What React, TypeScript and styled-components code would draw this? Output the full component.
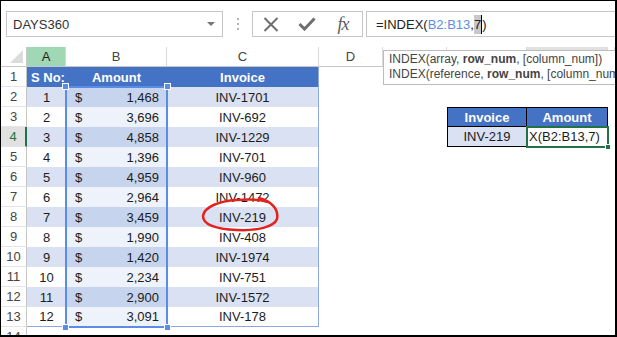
import React from 'react';
import styled, { createGlobalStyle, css } from 'styled-components';

const GlobalStyle = createGlobalStyle`
  html, body {
    margin: 0;
    padding: 0;
    background: #fff;
  }
  body {
    font-family: 'Liberation Sans', Arial, sans-serif;
  }
  * {
    box-sizing: border-box;
  }
`;

// row header, A..H
const COLUMNS = '26px 39px 101px 152px 64px 64px 80px 81px 1fr';

const TABLE_BLUE = '#4472c4';
const BAND = '#d9e1f2';
const EDGE = '#8ea9db';
const RANGE = '#5b8de6';
const EXCEL_GREEN = '#217346';

const Frame = styled.div`
  width: 617px;
  height: 337px;
  border: 1px solid #000;
  border-right-width: 2px;
  border-bottom-width: 2px;
  overflow: hidden;
  background: #fff;
  display: flex;
  flex-direction: column;
`;

const Toolbar = styled.div`
  height: 46px;
  flex: none;
  display: flex;
  align-items: flex-start;
  padding: 10px 0 0 5px;
`;

const NameBox = styled.div`
  width: 217px;
  height: 26px;
  border: 1px solid #c6c6c6;
  display: flex;
  align-items: center;
  justify-content: space-between;
  padding: 0 7px 0 6px;
  font-size: 13px;
  color: #333;
`;

const DropArrow = styled.span`
  width: 0;
  height: 0;
  border-left: 4px solid transparent;
  border-right: 4px solid transparent;
  border-top: 4px solid #777;
`;

const Grip = styled.div`
  width: 29px;
  height: 26px;
  display: flex;
  flex-direction: column;
  align-items: center;
  justify-content: center;
  gap: 3px;
`;

const GripDot = styled.span`
  width: 2px;
  height: 2px;
  background: #b3b3b3;
`;

const ButtonBox = styled.div`
  width: 111px;
  height: 26px;
  border: 1px solid #c6c6c6;
  display: grid;
  grid-template-columns: repeat(3, 36px);
  align-items: center;
  justify-items: center;
`;

const FxLabel = styled.span`
  font-family: 'Liberation Serif', 'Times New Roman', serif;
  font-style: italic;
  font-size: 18px;
  color: #5c5c5c;
  letter-spacing: -1px;
  line-height: 1;
`;

const FormulaInput = styled.div`
  flex: 1;
  margin-left: 3px;
  height: 26px;
  border: 1px solid #c6c6c6;
  border-right: none;
  display: flex;
  align-items: center;
  padding-left: 9px;
  font-size: 13px;
  color: #222;
  white-space: nowrap;
`;

const RefText = styled.span`
  color: ${RANGE};
`;

const Caret = styled.span`
  background: #c8c8c8;
  border-right: 1px solid #000;
  padding: 2px 0;
`;

const Sheet = styled.div`
  position: relative;
`;

const CellGrid = styled.div`
  display: grid;
  grid-template-columns: ${COLUMNS};
  grid-auto-rows: 20px;
  font-size: 13px;
`;

const OverlayGrid = styled(CellGrid)`
  position: absolute;
  inset: 0;
  pointer-events: none;
`;

const Corner = styled.div`
  border-right: 1px solid #c6c6c6;
  border-bottom: 1px solid #c6c6c6;
  display: flex;
  align-items: flex-end;
  justify-content: flex-end;
  padding: 0 3px 3px 0;
`;

const CornerMark = styled.span`
  width: 0;
  height: 0;
  border-left: 13px solid transparent;
  border-bottom: 13px solid #dcdcdc;
`;

const ColHead = styled.div<{ $state?: 'green' | 'gray' }>`
  display: flex;
  align-items: center;
  justify-content: center;
  border-right: 1px solid #dadada;
  border-bottom: 1px solid #c6c6c6;
  background: ${(p) => (p.$state === 'green' ? '#a0d7b4' : p.$state === 'gray' ? '#e1e1e1' : '#fff')};
  color: ${(p) => (p.$state === 'green' ? '#1e1e1e' : '#444')};
`;

const RowHead = styled.div<{ $active?: boolean }>`
  display: flex;
  align-items: center;
  justify-content: center;
  border-bottom: 1px solid #e4e4e4;
  border-right: ${(p) => (p.$active ? `2px solid ${EXCEL_GREEN}` : '1px solid #c6c6c6')};
  background: ${(p) => (p.$active ? '#e1e1e1' : '#fff')};
  color: ${(p) => (p.$active ? EXCEL_GREEN : '#444')};
`;

type Tone = 'head' | 'band' | 'plain' | 'bandRange' | 'plainRange' | 'empty';

const toneBg: Record<Tone, string> = {
  head: TABLE_BLUE,
  band: BAND,
  plain: '#fff',
  bandRange: '#c7d4ee',
  plainRange: '#edf2fb',
  empty: '#fff',
};

const Cell = styled.div<{
  $tone: Tone;
  $align?: 'left' | 'center' | 'split';
  $edge?: boolean;
  $last?: boolean;
}>`
  display: flex;
  align-items: center;
  white-space: nowrap;
  overflow: hidden;
  background: ${(p) => toneBg[p.$tone]};
  color: ${(p) => (p.$tone === 'head' ? '#fff' : '#1c1c1c')};
  font-weight: ${(p) => (p.$tone === 'head' ? 700 : 400)};
  justify-content: ${(p) =>
    p.$align === 'left' ? 'flex-start' : p.$align === 'split' ? 'space-between' : 'center'};
  padding: ${(p) => (p.$align === 'left' ? '0 0 0 4px' : p.$align === 'split' ? '0 8px 0 9px' : '0')};
  ${(p) =>
    p.$edge &&
    css`
      border-right: 1px solid ${EDGE};
    `}
  ${(p) =>
    p.$last &&
    css`
      border-bottom: 1px solid ${EDGE};
    `}
`;

const LookupCell = styled.div<{ $head?: boolean; $first?: boolean; $top?: boolean; $left?: boolean }>`
  display: flex;
  align-items: center;
  justify-content: ${(p) => (p.$left ? 'flex-start' : 'center')};
  padding-left: ${(p) => (p.$left ? '2px' : '0')};
  white-space: nowrap;
  overflow: hidden;
  background: ${(p) => (p.$head ? TABLE_BLUE : p.$first ? BAND : '#fff')};
  color: ${(p) => (p.$head ? '#fff' : '#1c1c1c')};
  font-weight: ${(p) => (p.$head ? 700 : 400)};
  border-right: 1px solid #000;
  border-bottom: 1px solid #000;
  border-left: ${(p) => (p.$first ? '1px solid #000' : 'none')};
  border-top: ${(p) => (p.$top ? '1px solid #000' : 'none')};
`;

const RangeBox = styled.div`
  grid-row: 3 / 15;
  grid-column: 3 / 4;
  margin: -1px;
  border: 2px solid ${RANGE};
  position: relative;
`;

const Handle = styled.span<{ $v: 'top' | 'bottom'; $h: 'left' | 'right' }>`
  position: absolute;
  width: 7px;
  height: 7px;
  background: ${RANGE};
  border: 1px solid #fff;
  ${(p) => (p.$v === 'top' ? 'top: -5px;' : 'bottom: -5px;')}
  ${(p) => (p.$h === 'left' ? 'left: -5px;' : 'right: -5px;')}
`;

const ActiveBox = styled.div`
  grid-row: 5 / 6;
  grid-column: 8 / 9;
  margin: -1px;
  border: 2px solid ${EXCEL_GREEN};
  position: relative;
`;

const FillHandle = styled.span`
  position: absolute;
  right: -4px;
  bottom: -4px;
  width: 6px;
  height: 6px;
  background: ${EXCEL_GREEN};
  border: 1px solid #fff;
`;

const Circled = styled.div`
  grid-row: 8 / 11;
  grid-column: 4 / 5;
  svg {
    overflow: visible;
    display: block;
  }
`;

const Tooltip = styled.div`
  position: absolute;
  top: 3px;
  left: 382px;
  width: 260px;
  background: #fff;
  border: 1px solid #bcbcbc;
  padding: 1px 4px 2px 5px;
  font-size: 12px;
  line-height: 15px;
  color: #444;
  white-space: nowrap;
`;

const data: [number, string, string][] = [
  [1, '1,468', 'INV-1701'],
  [2, '3,696', 'INV-692'],
  [3, '4,858', 'INV-1229'],
  [4, '1,396', 'INV-701'],
  [5, '4,959', 'INV-960'],
  [6, '2,964', 'INV-1472'],
  [7, '3,459', 'INV-219'],
  [8, '1,990', 'INV-408'],
  [9, '1,420', 'INV-1974'],
  [10, '2,234', 'INV-751'],
  [11, '2,900', 'INV-1572'],
  [12, '3,091', 'INV-178'],
];

// E..H headers sit under the function tooltip, so only their boxes show
const headers = [
  { key: 'A', label: 'A', state: 'green' as const },
  { key: 'B', label: 'B' },
  { key: 'C', label: 'C' },
  { key: 'D', label: 'D' },
  { key: 'E', label: '' },
  { key: 'F', label: '' },
  { key: 'G', label: '', state: 'gray' as const },
  { key: 'H', label: '' },
];

const CancelIcon = () => (
  <svg width="16" height="15" viewBox="0 0 16 15">
    <path d="M1.5 1 L14.5 14 M14.5 1 L1.5 14" stroke="#6e6e6e" strokeWidth="2" fill="none" />
  </svg>
);

const EnterIcon = () => (
  <svg width="18" height="14" viewBox="0 0 18 14">
    <path d="M1.5 7 L6.5 12 L16.5 1.5" stroke="#6e6e6e" strokeWidth="3" fill="none" />
  </svg>
);

const SheetRow: React.FC<{ r: number }> = ({ r }) => {
  const item = r >= 2 && r <= 13 ? data[r - 2] : null;
  const band = r % 2 === 0;
  const last = r === 13;
  let a: React.ReactNode = <Cell $tone="empty" />;
  let b: React.ReactNode = <Cell $tone="empty" />;
  let c: React.ReactNode = <Cell $tone="empty" />;

  if (r === 1) {
    a = (
      <Cell $tone="head" $align="left">
        S No:
      </Cell>
    );
    b = <Cell $tone="head">Amount</Cell>;
    c = (
      <Cell $tone="head" $edge>
        Invoice
      </Cell>
    );
  } else if (item) {
    a = (
      <Cell $tone={band ? 'band' : 'plain'} $last={last}>
        {item[0]}
      </Cell>
    );
    b = (
      <Cell $tone={band ? 'bandRange' : 'plainRange'} $align="split" $last={last}>
        <span>$</span>
        <span>{item[1]}</span>
      </Cell>
    );
    c = (
      <Cell $tone={band ? 'band' : 'plain'} $edge $last={last}>
        {item[2]}
      </Cell>
    );
  }

  let f: React.ReactNode = <Cell $tone="empty" />;
  let g: React.ReactNode = <Cell $tone="empty" />;
  if (r === 3) {
    f = (
      <LookupCell $head $first $top>
        Invoice
      </LookupCell>
    );
    g = (
      <LookupCell $head $top>
        Amount
      </LookupCell>
    );
  } else if (r === 4) {
    f = <LookupCell $first>INV-219</LookupCell>;
    g = <LookupCell $left>X(B2:B13,7)</LookupCell>;
  }

  return (
    <>
      <RowHead $active={r === 4}>{r}</RowHead>
      {a}
      {b}
      {c}
      <Cell $tone="empty" />
      <Cell $tone="empty" />
      {f}
      {g}
      <Cell $tone="empty" />
    </>
  );
};

export default function App() {
  const rows = Array.from({ length: 14 }, (_, i) => i + 1);
  return (
    <>
      <GlobalStyle />
      <Frame>
        <Toolbar>
          <NameBox>
            <span>DAYS360</span>
            <DropArrow />
          </NameBox>
          <Grip>
            <GripDot />
            <GripDot />
            <GripDot />
          </Grip>
          <ButtonBox>
            <CancelIcon />
            <EnterIcon />
            <FxLabel>fx</FxLabel>
          </ButtonBox>
          <FormulaInput>
            =INDEX(<RefText>B2:B13</RefText>,<Caret>7</Caret>)
          </FormulaInput>
        </Toolbar>

        <Sheet>
          <CellGrid>
            <Corner>
              <CornerMark />
            </Corner>
            {headers.map((h) => (
              <ColHead key={h.key} $state={h.state}>
                {h.label}
              </ColHead>
            ))}
            {rows.map((r) => (
              <SheetRow key={r} r={r} />
            ))}
          </CellGrid>

          <OverlayGrid>
            <RangeBox>
              <Handle $v="top" $h="left" />
              <Handle $v="top" $h="right" />
              <Handle $v="bottom" $h="left" />
              <Handle $v="bottom" $h="right" />
            </RangeBox>
            <Circled>
              <svg width="152" height="60" viewBox="0 0 152 60">
                <path
                  d="M92 11 C104 14, 112 22, 110 32 C107 40, 90 44, 70 43 C48 42, 36 37, 36 29 C37 20, 52 14, 70 13 C84 12, 95 13, 101 15"
                  stroke="#e2231d"
                  strokeWidth="2.5"
                  fill="none"
                  strokeLinecap="round"
                />
              </svg>
            </Circled>
            <ActiveBox>
              <FillHandle />
            </ActiveBox>
          </OverlayGrid>

          <Tooltip>
            <div>
              INDEX(array, <b>row_num</b>, [column_num])
            </div>
            <div>
              INDEX(reference, <b>row_num</b>, [column_num])
            </div>
          </Tooltip>
        </Sheet>
      </Frame>
    </>
  );
}
